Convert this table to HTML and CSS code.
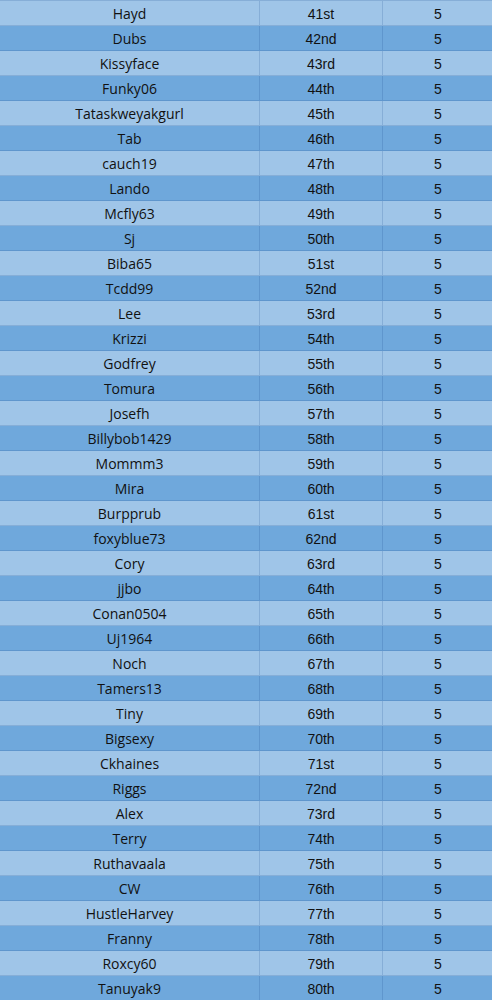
FILE: index.html
```html
<!DOCTYPE html>
<html>
<head>
<meta charset="utf-8">
<link rel="stylesheet" href="styles.css">
</head>
<body>
<table class="sheet">
<tbody>
<tr><td>Hayd</td><td>41st</td><td>5</td></tr>
<tr><td>Dubs</td><td>42nd</td><td>5</td></tr>
<tr><td>Kissyface</td><td>43rd</td><td>5</td></tr>
<tr><td>Funky06</td><td>44th</td><td>5</td></tr>
<tr><td>Tataskweyakgurl</td><td>45th</td><td>5</td></tr>
<tr><td>Tab</td><td>46th</td><td>5</td></tr>
<tr><td>cauch19</td><td>47th</td><td>5</td></tr>
<tr><td>Lando</td><td>48th</td><td>5</td></tr>
<tr><td>Mcfly63</td><td>49th</td><td>5</td></tr>
<tr><td>Sj</td><td>50th</td><td>5</td></tr>
<tr><td>Biba65</td><td>51st</td><td>5</td></tr>
<tr><td>Tcdd99</td><td>52nd</td><td>5</td></tr>
<tr><td>Lee</td><td>53rd</td><td>5</td></tr>
<tr><td>Krizzi</td><td>54th</td><td>5</td></tr>
<tr><td>Godfrey</td><td>55th</td><td>5</td></tr>
<tr><td>Tomura</td><td>56th</td><td>5</td></tr>
<tr><td>Josefh</td><td>57th</td><td>5</td></tr>
<tr><td>Billybob1429</td><td>58th</td><td>5</td></tr>
<tr><td>Mommm3</td><td>59th</td><td>5</td></tr>
<tr><td>Mira</td><td>60th</td><td>5</td></tr>
<tr><td>Burpprub</td><td>61st</td><td>5</td></tr>
<tr><td>foxyblue73</td><td>62nd</td><td>5</td></tr>
<tr><td>Cory</td><td>63rd</td><td>5</td></tr>
<tr><td>jjbo</td><td>64th</td><td>5</td></tr>
<tr><td>Conan0504</td><td>65th</td><td>5</td></tr>
<tr><td>Uj1964</td><td>66th</td><td>5</td></tr>
<tr><td>Noch</td><td>67th</td><td>5</td></tr>
<tr><td>Tamers13</td><td>68th</td><td>5</td></tr>
<tr><td>Tiny</td><td>69th</td><td>5</td></tr>
<tr><td>Bigsexy</td><td>70th</td><td>5</td></tr>
<tr><td>Ckhaines</td><td>71st</td><td>5</td></tr>
<tr><td>Riggs</td><td>72nd</td><td>5</td></tr>
<tr><td>Alex</td><td>73rd</td><td>5</td></tr>
<tr><td>Terry</td><td>74th</td><td>5</td></tr>
<tr><td>Ruthavaala</td><td>75th</td><td>5</td></tr>
<tr><td>CW</td><td>76th</td><td>5</td></tr>
<tr><td>HustleHarvey</td><td>77th</td><td>5</td></tr>
<tr><td>Franny</td><td>78th</td><td>5</td></tr>
<tr><td>Roxcy60</td><td>79th</td><td>5</td></tr>
<tr><td>Tanuyak9</td><td>80th</td><td>5</td></tr>
</tbody>
</table>
</body>
</html>
```

FILE: styles.css
```css
html, body {
  margin: 0;
  padding: 0;
  background: #9fc5e8;
}
.sheet {
  border-collapse: collapse;
  table-layout: fixed;
  width: 493px;
  font-family: "Open Sans", "Noto Sans", sans-serif;
  font-size: 14px;
  color: #111;
}
.sheet td {
  height: 22px;
  padding: 2px 0 0 0;
  text-align: center;
  vertical-align: top;
  line-height: 22px;
  border-top: 1px solid rgba(20, 70, 140, 0.18);
  border-left: 1px solid rgba(20, 70, 140, 0.18);
  white-space: nowrap;
}
.sheet td:nth-child(1) { width: 259px; border-left: none; }
.sheet td:nth-child(2),
.sheet td:nth-child(3) {
  font-family: "Liberation Sans", Arial, sans-serif;
}
.sheet td:nth-child(2) { width: 122px; }
.sheet td:nth-child(3) { width: 110px; }
.sheet tr:nth-child(odd) td { background: #9fc5e8; }
.sheet tr:nth-child(even) td { background: #6fa8dc; }
```
